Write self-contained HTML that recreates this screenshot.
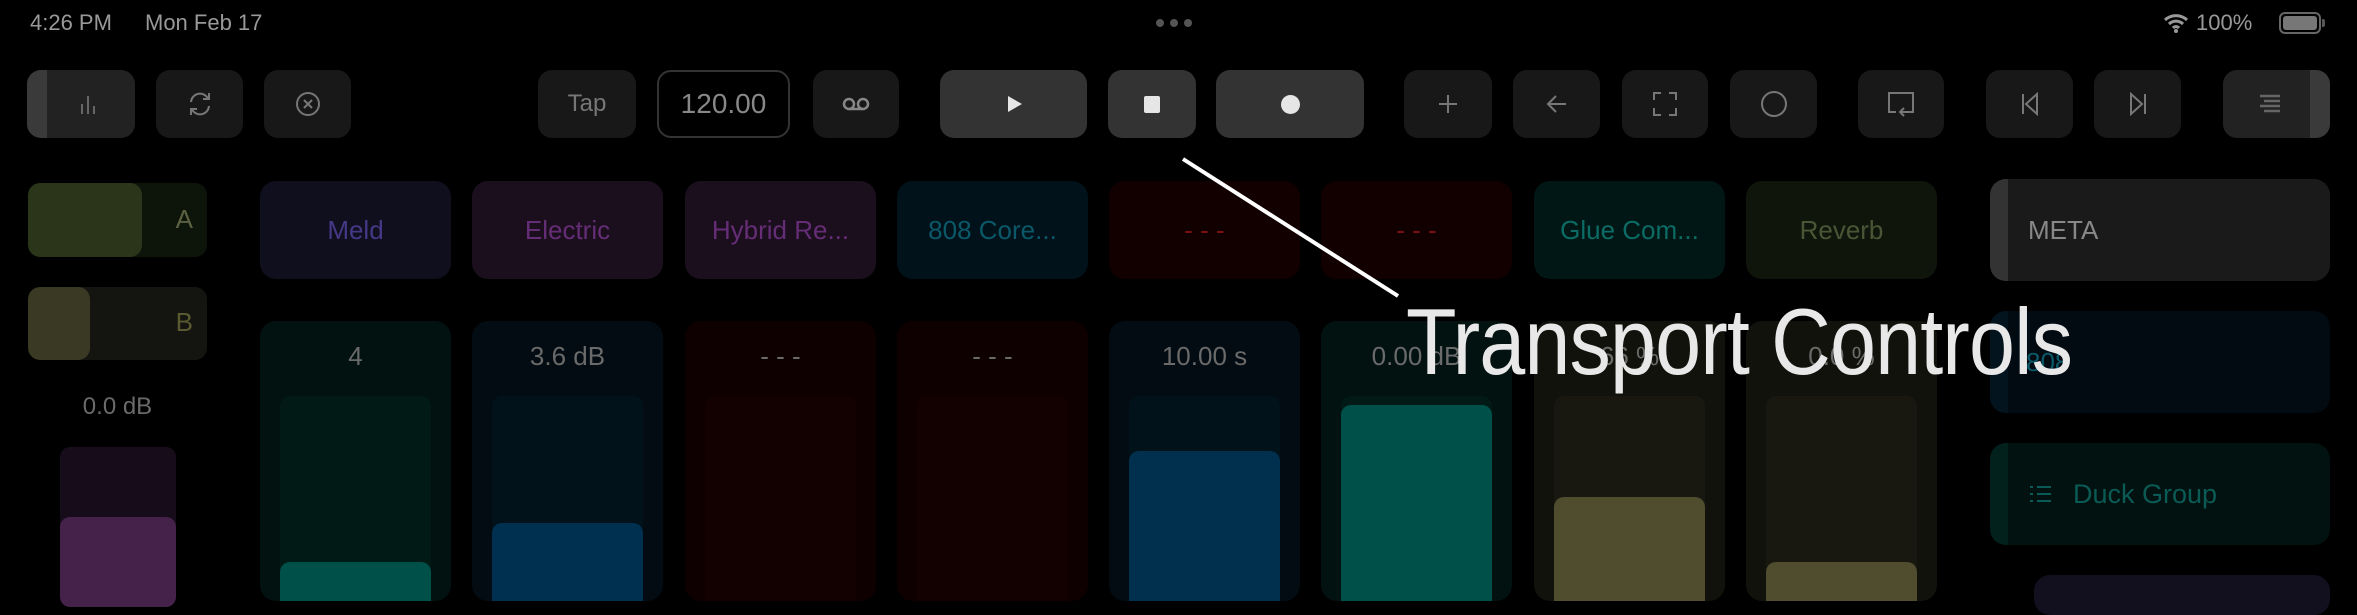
<!DOCTYPE html>
<html><head><meta charset="utf-8"><style>
*{margin:0;padding:0;box-sizing:border-box}
body{width:2357px;height:585px;background:#000;position:relative;overflow:hidden;font-family:"Liberation Sans",sans-serif}
.a{position:absolute}
.b{position:absolute;top:70px;height:68px;border-radius:14px;background:#181818;display:flex;align-items:center;justify-content:center;color:#777;overflow:hidden}
.p{position:absolute;top:181px;height:98px;width:191px;border-radius:16px;display:flex;align-items:center;justify-content:center;font-size:26px}
.c{position:absolute;top:321px;height:280px;width:191px;border-radius:16px;overflow:hidden}
.c .t{position:absolute;left:20px;right:20px;top:75px;bottom:-20px;border-radius:10px}
.c .f{position:absolute;left:0;right:0;bottom:0;border-radius:10px}
.txt{position:absolute;width:100%;text-align:center;top:20px;color:#6a6a6a;font-size:26px}
</style></head><body>
<div class="a" style="left:30px;top:10px;font-size:22px;color:#999">4:26 PM</div>
<div class="a" style="left:145px;top:10px;font-size:22px;color:#999">Mon Feb 17</div>
<div class="a" style="left:1156px;top:19px;width:8px;height:8px;border-radius:4px;background:#555;box-shadow:14px 0 #555,28px 0 #555"></div>
<svg class="a" style="left:2163px;top:12px" width="26" height="22" viewBox="0 0 26 22"><path d="M2 8a16 16 0 0 1 22 0M6 12a10 10 0 0 1 14 0M10 16a4 4 0 0 1 6 0" stroke="#999" stroke-width="3" fill="none"/><circle cx="13" cy="19" r="2" fill="#999"/></svg>
<div class="a" style="left:2196px;top:10px;font-size:22px;color:#999">100%</div>
<div class="a" style="left:2279px;top:12px;width:42px;height:22px;border:2px solid #666;border-radius:6px;padding:2px"><div style="width:100%;height:100%;background:#777;border-radius:3px"></div></div>
<div class="a" style="left:2322px;top:19px;width:3px;height:8px;background:#555;border-radius:0 2px 2px 0"></div>

<div class="b" style="left:27px;width:108px;background:#222"><div class="a" style="left:0;top:0;bottom:0;width:20px;background:#3a3a3a"></div><svg width="20" height="24" style="margin-left:14px"><path d="M4 22V12M10 22V4M16 22V14" stroke="#666" stroke-width="2"/></svg></div>
<div class="b" style="left:156px;width:87px"><svg width="30" height="30" viewBox="0 0 30 30"><path d="M6 13a9 9 0 0 1 16-5l2 2M24 17a9 9 0 0 1-16 5l-2-2M24 4v6h-6M6 26v-6h6" stroke="#777" stroke-width="2" fill="none"/></svg></div>
<div class="b" style="left:264px;width:87px"><svg width="28" height="28"><circle cx="14" cy="14" r="11" stroke="#777" stroke-width="2" fill="none"/><path d="M10 10l8 8M18 10l-8 8" stroke="#777" stroke-width="2"/></svg></div>
<div class="b" style="left:538px;width:98px;font-size:24px">Tap</div>
<div class="b" style="left:657px;width:133px;background:#000;border:2px solid #333;font-size:28px;color:#888">120.00</div>
<div class="b" style="left:813px;width:86px"><svg width="30" height="20"><circle cx="8" cy="10" r="5" stroke="#888" stroke-width="2.5" fill="none"/><circle cx="22" cy="10" r="5" stroke="#888" stroke-width="2.5" fill="none"/><path d="M8 15h14" stroke="#888" stroke-width="2.5"/></svg></div>
<div class="b" style="left:940px;width:147px;background:#333"><svg width="18" height="20"><path d="M3 2l14 8-14 8z" fill="#e6e6e6"/></svg></div>
<div class="b" style="left:1108px;width:88px;background:#333"><div style="width:16px;height:17px;background:#e6e6e6;border-radius:2px"></div></div>
<div class="b" style="left:1216px;width:148px;background:#333"><div style="width:19px;height:19px;background:#e6e6e6;border-radius:50%"></div></div>
<div class="b" style="left:1404px;width:88px"><svg width="22" height="22"><path d="M11 2v18M2 11h18" stroke="#777" stroke-width="2"/></svg></div>
<div class="b" style="left:1513px;width:87px"><svg width="22" height="22"><path d="M20 11H3M10 3l-8 8 8 8" stroke="#777" stroke-width="2" fill="none"/></svg></div>
<div class="b" style="left:1622px;width:86px"><svg width="26" height="26"><path d="M2 9V2h7M17 2h7v7M24 17v7h-7M9 24H2v-7" stroke="#777" stroke-width="2" fill="none"/></svg></div>
<div class="b" style="left:1730px;width:87px"><svg width="28" height="28"><circle cx="14" cy="14" r="12" stroke="#777" stroke-width="2" fill="none"/></svg></div>
<div class="b" style="left:1858px;width:86px"><svg width="30" height="28"><path d="M10 22H3V3h24v19h-7M18 26l-4-4 4-4M14 22h8" stroke="#777" stroke-width="2" fill="none"/></svg></div>
<div class="b" style="left:1986px;width:87px"><svg width="20" height="24"><path d="M3 2v20M17 2L6 12l11 10z" stroke="#777" stroke-width="2" fill="none"/></svg></div>
<div class="b" style="left:2094px;width:87px"><svg width="20" height="24"><path d="M17 2v20M3 2l11 10L3 22z" stroke="#777" stroke-width="2" fill="none"/></svg></div>
<div class="b" style="left:2223px;width:107px;background:#222"><div class="a" style="right:0;top:0;bottom:0;width:20px;background:#3a3a3a"></div><svg width="24" height="22" style="margin-right:14px"><path d="M2 3h20M6 8h16M2 13h20M6 18h16" stroke="#666" stroke-width="2.5"/></svg></div>

<div class="a" style="left:28px;top:183px;width:179px;height:74px;border-radius:12px;background:#0d140a;overflow:hidden"><div style="width:114px;height:100%;background:#2a3519;border-radius:12px"></div><div class="a" style="right:14px;top:21px;font-size:26px;color:#5a6040">A</div></div>
<div class="a" style="left:28px;top:287px;width:179px;height:73px;border-radius:12px;background:#141410;overflow:hidden"><div style="width:62px;height:100%;background:#3a3a24;border-radius:12px"></div><div class="a" style="right:14px;top:20px;font-size:26px;color:#5a5a30">B</div></div>
<div class="a" style="left:28px;top:393px;width:179px;text-align:center;font-size:24px;color:#6a6a6a">0.0 dB</div>
<div class="a" style="left:60px;top:447px;width:116px;height:160px;border-radius:10px;background:#170d1a;overflow:hidden"><div class="a" style="left:0;right:0;top:70px;bottom:0;background:#45224a;border-radius:10px"></div></div>

<div class="p" style="left:260px;background:#0f0f1e;color:#463886">Meld</div>
<div class="p" style="left:472px;background:#1b0f1e;color:#652d76">Electric</div>
<div class="p" style="left:685px;background:#1b0f1e;color:#652d76">Hybrid Re...</div>
<div class="p" style="left:897px;background:#01121a;color:#0a5868">808 Core...</div>
<div class="p" style="left:1109px;background:#120000;color:#7a1010">- - -</div>
<div class="p" style="left:1321px;background:#120000;color:#7a1010">- - -</div>
<div class="p" style="left:1534px;background:#011716;color:#0a6c64">Glue Com...</div>
<div class="p" style="left:1746px;background:#10150c;color:#4a5535">Reverb</div>
<div class="a" style="left:1990px;top:179px;width:340px;height:102px;border-radius:16px;background:#1a1a1a;overflow:hidden"><div class="a" style="left:0;top:0;bottom:0;width:18px;background:#333"></div><div class="a" style="left:38px;top:36px;font-size:26px;color:#888">META</div></div>

<div class="c" style="left:260px;background:#021210"><div class="txt">4</div><div class="t" style="background:#021a16"><div class="f" style="top:166px;background:#00504a"></div></div></div>
<div class="c" style="left:472px;background:#020c12"><div class="txt">3.6 dB</div><div class="t" style="background:#02121b"><div class="f" style="top:127px;background:#003050"></div></div></div>
<div class="c" style="left:685px;background:#0f0000"><div class="txt">- - -</div><div class="t" style="background:#130000"></div></div>
<div class="c" style="left:897px;background:#0f0000"><div class="txt">- - -</div><div class="t" style="background:#130000"></div></div>
<div class="c" style="left:1109px;background:#020c12"><div class="txt">10.00 s</div><div class="t" style="background:#02121b"><div class="f" style="top:55px;background:#00304e"></div></div></div>
<div class="c" style="left:1321px;background:#021210"><div class="txt">0.00 dB</div><div class="t" style="background:#021a16"><div class="f" style="top:9px;background:#00504a"></div></div></div>
<div class="c" style="left:1534px;background:#12120c"><div class="txt">66 %</div><div class="t" style="background:#181811"><div class="f" style="top:101px;background:#4f4d2e"></div></div></div>
<div class="c" style="left:1746px;background:#12120c"><div class="txt">0.0 %</div><div class="t" style="background:#181811"><div class="f" style="top:166px;background:#4f4d2e"></div></div></div>

<div class="a" style="left:1990px;top:311px;width:340px;height:102px;border-radius:16px;background:#020a12;overflow:hidden"><div class="a" style="left:0;top:0;bottom:0;width:18px;background:#03141f"></div><div class="a" style="left:36px;top:36px;font-size:26px;color:#0a5a6a">808</div></div>
<div class="a" style="left:1990px;top:443px;width:340px;height:102px;border-radius:16px;background:#021210;overflow:hidden"><div class="a" style="left:0;top:0;bottom:0;width:18px;background:#02201c"></div><svg class="a" style="left:40px;top:42px" width="22" height="18"><path d="M0 2h3M7 2h14M0 9h3M7 9h14M0 16h3M7 16h14" stroke="#0a5a55" stroke-width="2"/></svg><div class="a" style="left:83px;top:36px;font-size:27px;color:#0a5a55">Duck Group</div></div>
<div class="a" style="left:2034px;top:575px;width:296px;height:40px;border-radius:16px;background:#120f1e"></div>

<svg class="a" style="left:0;top:0" width="2357" height="585"><line x1="1183" y1="159" x2="1398" y2="296" stroke="#fff" stroke-width="4"/></svg>
<div class="a" style="left:1406px;top:288px;font-size:94px;color:#e8e8e8;white-space:nowrap;transform:scaleX(0.88);transform-origin:left top;letter-spacing:-1px">Transport Controls</div>
</body></html>
